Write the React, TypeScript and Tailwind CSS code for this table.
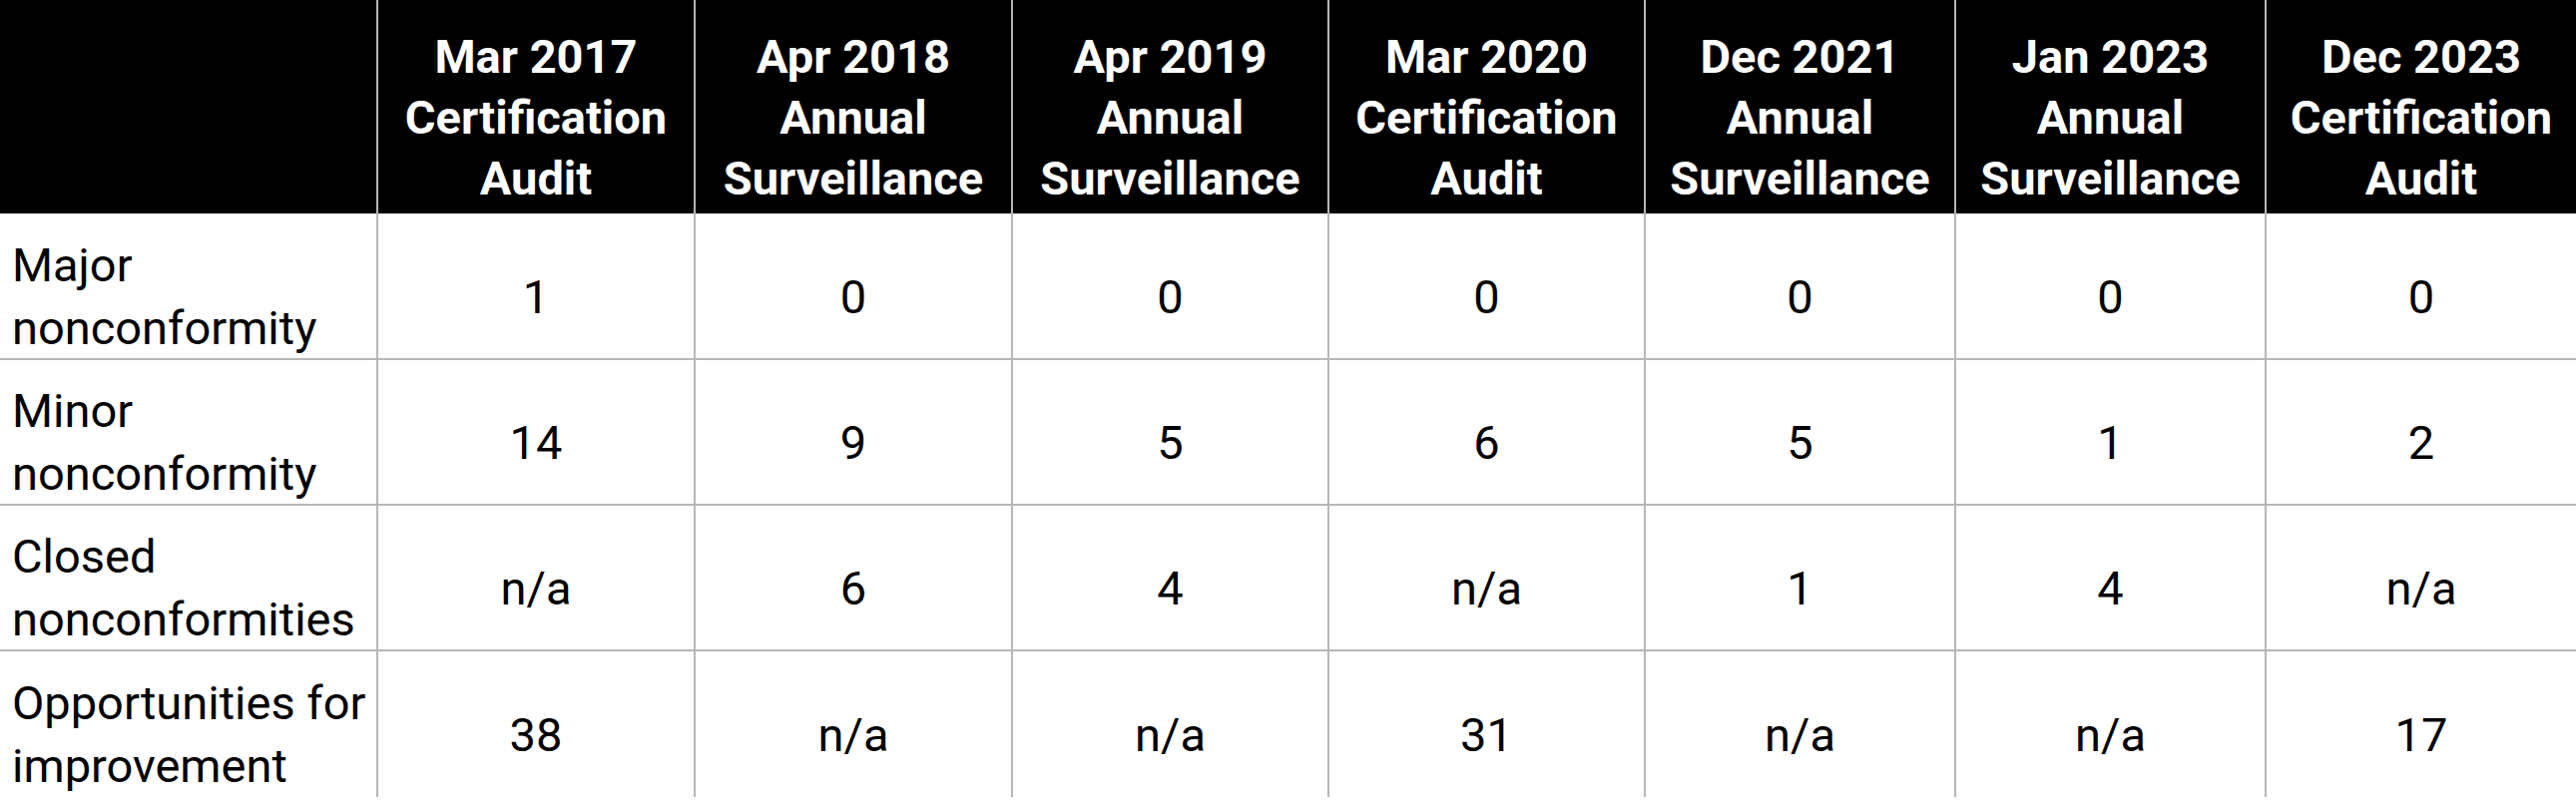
const columns = [
  ['Mar 2017', 'Certification', 'Audit'],
  ['Apr 2018', 'Annual', 'Surveillance'],
  ['Apr 2019', 'Annual', 'Surveillance'],
  ['Mar 2020', 'Certification', 'Audit'],
  ['Dec 2021', 'Annual', 'Surveillance'],
  ['Jan 2023', 'Annual', 'Surveillance'],
  ['Dec 2023', 'Certification', 'Audit'],
];

const rows = [
  { label: ['Major', 'nonconformity'], values: ['1', '0', '0', '0', '0', '0', '0'] },
  { label: ['Minor', 'nonconformity'], values: ['14', '9', '5', '6', '5', '1', '2'] },
  { label: ['Closed', 'nonconformities'], values: ['n/a', '6', '4', 'n/a', '1', '4', 'n/a'] },
  { label: ['Opportunities for', 'improvement'], values: ['38', 'n/a', 'n/a', '31', 'n/a', 'n/a', '17'] },
];

const Lines = ({ lines }: { lines: string[] }) => (
  <div>
    {lines.map((l, i) => (
      <div key={i} className="whitespace-nowrap">{l}</div>
    ))}
  </div>
);

const App = () => {
  return (
    <div
      className="w-[2581px] h-[805px] bg-white overflow-hidden text-black"
      style={{ fontFamily: 'Roboto, "Liberation Sans", sans-serif' }}
    >
      <div className="grid grid-cols-[379px_318px_318px_317px_317px_311px_311px_310px]">
        {/* header */}
        <div className="h-[214px] bg-black border-r-2 border-[#b7b7b7]" />
        {columns.map((c, i) => (
          <div
            key={i}
            className={`h-[214px] bg-black text-white font-bold text-[47px] leading-[61px] text-center flex items-center justify-center pt-[20px] ${
              i < columns.length - 1 ? 'border-r-2 border-[#b7b7b7]' : ''
            }`}
          >
            <Lines lines={c} />
          </div>
        ))}

        {/* body */}
        {rows.map((r, ri) => {
          const last = ri === rows.length - 1;
          const rowCls = ri === 0 ? 'h-[147px] pt-[21px]' : 'h-[146px] pt-[20px]';
          const bottom = last ? '' : 'border-b-2';
          return [
            <div
              key={`l${ri}`}
              className={`${rowCls} ${bottom} border-r-2 border-[#b7b7b7] flex items-center pl-[12px] text-[47px] leading-[63px]`}
            >
              <Lines lines={r.label} />
            </div>,
            ...r.values.map((v, vi) => (
              <div
                key={`v${ri}-${vi}`}
                className={`${rowCls} ${bottom} ${
                  vi < r.values.length - 1 ? 'border-r-2' : ''
                } border-[#b7b7b7] flex items-center justify-center text-[47px] leading-[63px]`}
              >
                {v}
              </div>
            )),
          ];
        })}
      </div>
    </div>
  );
};

export default App;
